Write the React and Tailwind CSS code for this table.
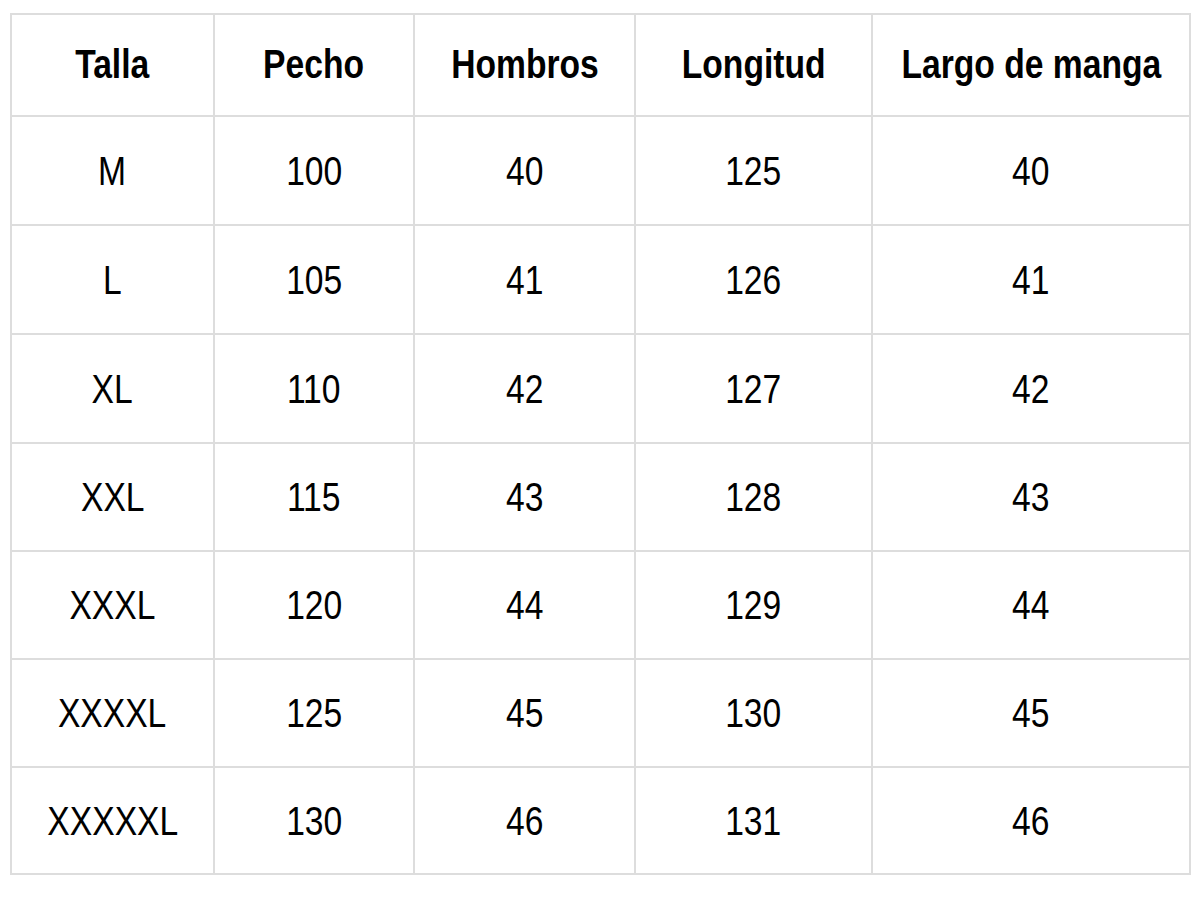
import React from "react";

const header = ["Talla", "Pecho", "Hombros", "Longitud", "Largo de manga"];
const rows = [
  ["M", "100", "40", "125", "40"],
  ["L", "105", "41", "126", "41"],
  ["XL", "110", "42", "127", "42"],
  ["XXL", "115", "43", "128", "43"],
  ["XXXL", "120", "44", "129", "44"],
  ["XXXXL", "125", "45", "130", "45"],
  ["XXXXXL", "130", "46", "131", "46"],
];

export default function App() {
  return (
    <div
      className="w-[1200px] h-[900px] bg-white pt-[13px] pl-[10px]"
      style={{ fontFamily: '"Liberation Sans", Arial, sans-serif' }}
    >
      <div className="inline-grid grid-cols-[201px_198px_219px_235px_316px] grid-rows-[100px_107px_107px_107px_106px_106px_106px_105px] gap-[2px] p-[2px] bg-[#dddddd]">
        {header.map((h) => (
          <div key={h} className="bg-white flex items-center justify-center text-[41px] font-bold text-black pb-[1px] whitespace-nowrap">
            <span className="inline-block scale-x-[0.82]">{h}</span>
          </div>
        ))}
        {rows.map((r) =>
          r.map((c, i) => (
            <div key={r[0] + i} className="bg-white flex items-center justify-center text-[41px] text-black pt-[2px] whitespace-nowrap">
              <span className="inline-block scale-x-[0.82]">{c}</span>
            </div>
          ))
        )}
      </div>
    </div>
  );
}
